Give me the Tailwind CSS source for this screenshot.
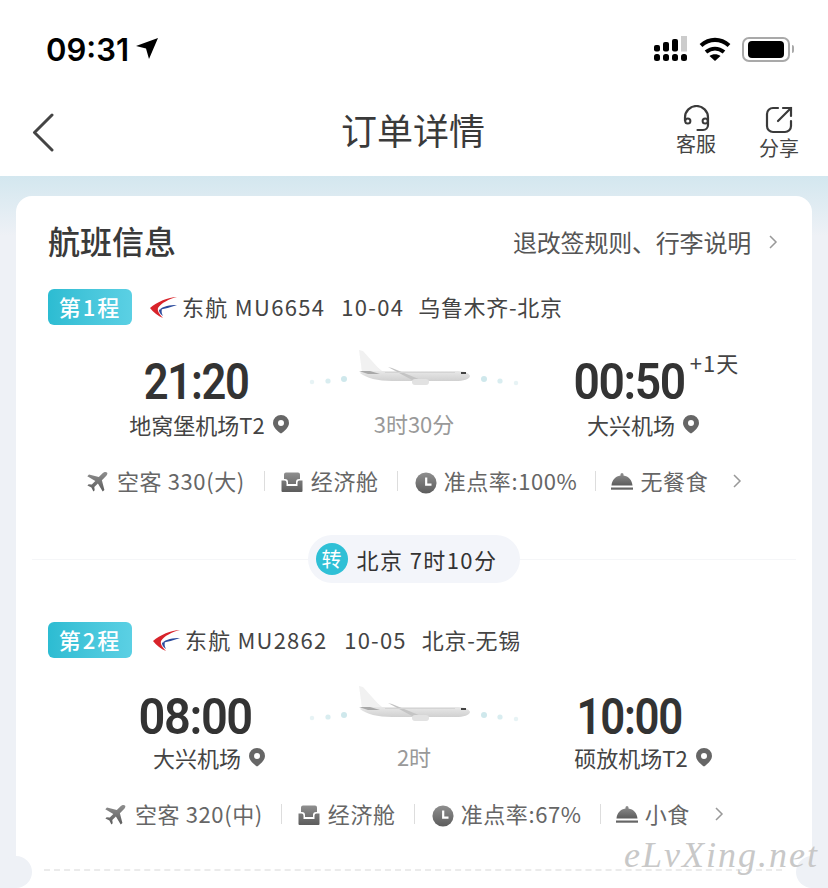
<!DOCTYPE html>
<html lang="zh">
<head>
<meta charset="utf-8">
<script src="https://cdn.jsdelivr.net/npm/@tailwindcss/browser@4"></script>
</head>
<body class="m-0">
<svg width="0" height="0" class="absolute">
  <defs>
    <linearGradient id="g" x1="0" y1="0" x2="0" y2="1"><stop offset="0" stop-color="#8f8f8f"/><stop offset="1" stop-color="#5c5c5c"/></linearGradient>
    <linearGradient id="pb" x1="0" y1="0" x2="0" y2="1"><stop offset="0" stop-color="#ffffff"/><stop offset="0.5" stop-color="#f6f6f6"/><stop offset="1" stop-color="#d0d0d0"/></linearGradient>
    <symbol id="plane" viewBox="0 0 212 50">
      <g fill="#cfe8ec"><circle cx="4" cy="40" r="2.200" opacity=".5"/><circle cx="20" cy="39" r="2.600" opacity=".8"/><circle cx="36" cy="37" r="3"/><circle cx="176" cy="37" r="3"/><circle cx="192" cy="39" r="2.600" opacity=".8"/><circle cx="208" cy="41" r="2.200" opacity=".5"/></g>
      <path d="M51 8 L55 9 C60 15 66 23 74 29 L150 29 C157 29 162 32 162 34 C162 37 155 39 148 39 L84 39 C70 39 58 36 52 31 L54 29 Z" fill="url(#pb)"/>
      <path d="M51 8 L55 9 L73 29 L54 29 Z" fill="#f1f1f1"/>
      <path d="M51 29 L62 29 L72 32 L60 32 Z" fill="#a8a8a8"/>
      <path d="M80 25 L84 26 L113 38 L104 38 Z" fill="#c4c4c4"/>
      <rect x="104" y="37" width="17" height="6" rx="3" fill="#e2e2e2"/>
      <rect x="77" y="30" width="70" height="1" fill="#d4d4d4"/>
      <rect x="153" y="30" width="5" height="2" fill="#444"/>
    </symbol>
    <symbol id="fly" viewBox="0 0 24 24"><path d="M22 2.500c-1-1-3-.6-4.400.8L13.800 7 4 4.500 2.300 6.200 10.300 11 6.800 14.600 3.700 14.200 2.400 15.500l4 2 2 4 1.300-1.300-.4-3.100 3.600-3.500 4.800 8 1.700-1.700L16.900 10.300l3.700-3.800C22 5.100 23 3.500 22 2.500z" fill="url(#g)"/></symbol>
    <symbol id="seat" viewBox="0 0 24 24"><path d="M6 2.500h12a2 2 0 0 1 2 2V9h-1a3 3 0 0 0-3 3v2H8v-2a3 3 0 0 0-3-3H4V4.500a2 2 0 0 1 2-2zM1.500 10.500h3a2 2 0 0 1 2 2V16h11v-3.500a2 2 0 0 1 2-2h3V21a1 1 0 0 1-1 1H2.500a1 1 0 0 1-1-1z" fill="url(#g)"/></symbol>
    <symbol id="clock" viewBox="0 0 24 24"><circle cx="12" cy="12" r="11.500" fill="url(#g)"/><path d="M11 6h2.400v6.500H18v2.400h-7z" fill="#fff"/></symbol>
    <symbol id="bell" viewBox="0 0 24 24"><path d="M10.500 4.500a1.500 1.500 0 1 1 3 0v1c5 .6 8.500 4.600 9 10h-21c.5-5.400 4-9.400 9-10z" fill="url(#g)"/><rect x="1" y="17.500" width="22" height="2.200" fill="#666"/></symbol>
    <symbol id="pin" viewBox="0 0 18 20"><path fill-rule="evenodd" d="M9 1a8 8 0 0 1 8 8c0 4.500-5 8.500-8 10.500C6 17.500 1 13.500 1 9a8 8 0 0 1 8-8zm0 5a3 3 0 1 0 0 6 3 3 0 0 0 0-6z" fill="#666"/></symbol>
    <symbol id="chev" viewBox="0 0 10 16"><path d="M2 2l6 6-6 6" fill="none" stroke="#999" stroke-width="1.500"/></symbol>
    <symbol id="ce" viewBox="0 0 30 24"><path d="M28 2C19 2 8 7 1 13c3 4 8 8 13 10-3-3-6-7-5-10 3-5 11-9 19-11z" fill="#d8232a"/><path d="M28 10c-7 0-14 1-18 5 5-1 12-3 18-5z" fill="#2a4a9c"/><path d="M10 15c0 2 1 4 4 6-1-2-2-4-1-7z" fill="#2a4a9c"/></symbol>
  </defs>
</svg>

<div class="relative h-[888px] w-[828px] overflow-hidden bg-[#eef1f6] font-['Noto_Sans_CJK_SC','Noto_Sans',sans-serif] text-[#333]">
  <header class="h-[176px] bg-white">
    <div class="flex h-[88px] items-center justify-between pl-[46px] pr-[34px] pt-[10px]">
      <div class="flex items-center gap-[7px]">
        <span class="font-['Inter',sans-serif] text-[31px] font-semibold leading-none text-black">09:31</span>
        <svg width="22" height="22" viewBox="0 0 22 22"><path d="M22 0 0 8l10 2.500L13 21z" fill="#000"/></svg>
      </div>
      <div class="flex items-center gap-[11px]">
        <svg width="34" height="26" viewBox="0 0 34 26"><g fill="#000"><rect x="0" y="9" width="6" height="6.500" rx="2"/><rect x="9" y="6" width="6" height="9.500" rx="2"/><rect x="18" y="3" width="6" height="12.500" rx="2"/><rect x="0" y="18" width="6" height="7" rx="2.500"/><rect x="9" y="18" width="6" height="7" rx="2.500"/><rect x="18" y="18" width="6" height="7" rx="2.500"/><rect x="27" y="18" width="6" height="7" rx="2.500"/></g><rect x="27" y="0" width="6" height="15.500" fill="#ccc"/></svg>
        <svg width="32" height="26" viewBox="0 0 32 26"><path d="M16 25l-5.500-5c3-2.500 8-2.500 11 0z" fill="#000"/><path d="M7 16c5.500-4.500 12.500-4.500 18 0" fill="none" stroke="#000" stroke-width="4"/><path d="M2 9.500c8.500-7.500 19.500-7.500 28 0" fill="none" stroke="#000" stroke-width="4.200"/></svg>
        <div class="flex items-center gap-[2px]">
          <div class="flex h-[25px] w-[48px] items-center justify-center rounded-[7px] border-2 border-[#a9a9a9]"><div class="h-[17px] w-[36px] rounded-[4px] bg-black"></div></div>
          <div class="h-[8px] w-[2px] rounded-r-full bg-[#a9a9a9]"></div>
        </div>
      </div>
    </div>
    <div class="relative flex h-[88px] items-center justify-center pb-[6px] pr-[2px]">
      <svg class="absolute left-[32px] top-[24px]" width="24" height="40" viewBox="0 0 24 40"><path d="M20 3 2.500 20.500 20 38" fill="none" stroke="#444" stroke-width="3" stroke-linecap="round" stroke-linejoin="round"/></svg>
      <h1 class="text-[36px] font-normal leading-none text-[#3a3a3a]">订单详情</h1>
      <div class="absolute left-[676px] top-[17px] flex w-[40px] flex-col items-center">
        <svg width="27" height="27" viewBox="0 0 27 27"><path d="M2 15.500V12.500a11.500 11.500 0 0 1 23 0V20a5 5 0 0 1-5 5h-5.500" fill="none" stroke="#3a3a3a" stroke-width="2.200" stroke-linecap="round"/><circle cx="4.800" cy="16" r="2.600" fill="none" stroke="#3a3a3a" stroke-width="2"/><circle cx="22.200" cy="16" r="2.600" fill="none" stroke="#3a3a3a" stroke-width="2"/></svg>
        <span class="text-[20px] leading-[24px] text-[#444]">客服</span>
      </div>
      <div class="absolute left-[759px] top-[18px] flex w-[40px] flex-col items-center">
        <svg width="28" height="28" viewBox="0 0 28 28"><path d="M13 2H8a6 6 0 0 0-6 6v12a6 6 0 0 0 6 6h12a6 6 0 0 0 6-6v-5" fill="none" stroke="#3a3a3a" stroke-width="2.200" stroke-linecap="round"/><path d="M13 15 26 2M18 2h8v8" fill="none" stroke="#3a3a3a" stroke-width="2.200" stroke-linecap="round"/></svg>
        <span class="mt-[2px] text-[20px] leading-[24px] text-[#444]">分享</span>
      </div>
    </div>
  </header>

  <div class="h-[60px] bg-gradient-to-b from-[#d3e7ef] to-[#eef1f6]"></div>

  <main class="absolute left-[16px] top-[196px] h-[720px] w-[796px] rounded-[16px] bg-white">
    <div class="flex h-[93px] items-center justify-between pb-[5px] pl-[32px] pr-[34px]">
      <h2 class="text-[32px] font-medium leading-none text-[#3a3a3a]">航班信息</h2>
      <div class="mt-[4px] flex items-center gap-[17px] text-[24px] leading-none tracking-[-0.2px] text-[#555]">退改签规则、行李说明<svg width="10" height="16"><use href="#chev"/></svg></div>
    </div>

    <!-- leg 1 -->
    <div class="flex h-[36px] items-center pl-[32px]">
      <span class="flex h-[36px] w-[84px] items-center justify-center rounded-[6px] bg-gradient-to-r from-[#2cbcd2] to-[#5bd0e4] pb-[3px] text-[22px] font-medium leading-none tracking-[2px] text-white">第1程</span>
      <svg class="ml-[17px]" width="30" height="24"><use href="#ce"/></svg>
      <div class="mb-[3px] ml-[3px] flex gap-[16px] whitespace-pre text-[22px] leading-none text-[#444]"><span class="tracking-[1.300px]">东航 MU6654</span><span class="tracking-[1.300px]">10-04</span><span class="ml-[-2px] tracking-[0.700px]">乌鲁木齐-北京</span></div>
    </div>
    <div class="grid h-[137px] grid-cols-[296px_204px_296px] pt-[27px]">
      <div class="flex flex-col items-center pl-[66px]">
        <span class="ml-[-2px] scale-x-[0.87] font-['Roboto',sans-serif] text-[50px] font-semibold leading-[60px] tracking-[-1.500px] text-[#333]">21:20</span>
        <span class="relative mt-[-2px] whitespace-nowrap text-[22px] leading-[28px] text-[#444]">地窝堡机场T2<svg class="absolute left-full top-[4px] ml-[7px]" width="18" height="20"><use href="#pin"/></svg></span>
      </div>
      <div class="flex flex-col items-center">
        <svg class="mt-[-10px]" width="212" height="50"><use href="#plane"/></svg>
        <span class="mt-[17px] text-[22px] leading-[28px] text-[#999]">3时30分</span>
      </div>
      <div class="flex flex-col items-center pr-[66px]">
        <div class="relative">
          <span class="ml-[-4px] block scale-x-[0.925] font-['Roboto',sans-serif] text-[50px] font-semibold leading-[60px] tracking-[-1.500px] text-[#333]">00:50</span>
          <span class="absolute left-[117px] top-[-4px] whitespace-nowrap text-[22px] leading-[28px] tracking-[1px] text-[#444]">+1天</span>
        </div>
        <span class="relative mt-[-2px] whitespace-nowrap text-[22px] leading-[28px] text-[#444]">大兴机场<svg class="absolute left-full top-[4px] ml-[7px]" width="18" height="20"><use href="#pin"/></svg></span>
      </div>
    </div>
    <div class="mt-[2px] flex h-[34px] items-center pl-[69px] text-[22px] leading-none tracking-[0.6px] text-[#666]">
      <svg class="mt-[2px]" width="24" height="24"><use href="#fly"/></svg><span class="mb-[2px] ml-[8px]">空客 330(大)</span>
      <i class="ml-[19px] mr-[15px] h-[20px] w-px bg-[#ddd]"></i>
      <svg class="mt-[2px]" width="24" height="24"><use href="#seat"/></svg><span class="mb-[2px] ml-[7px]">经济舱</span>
      <i class="ml-[18px] mr-[17px] h-[20px] w-px bg-[#ddd]"></i>
      <svg class="mt-[4px]" width="22" height="22"><use href="#clock"/></svg><span class="mb-[2px] ml-[7px]">准点率:100%</span>
      <i class="ml-[18px] mr-[14px] h-[20px] w-px bg-[#ddd]"></i>
      <svg class="mt-[2px]" width="24" height="24"><use href="#bell"/></svg><span class="mb-[2px] ml-[6px]">无餐食</span>
      <svg class="ml-[24px]" width="10" height="16"><use href="#chev"/></svg>
    </div>

    <div class="relative mt-[37px] flex h-[48px] items-center justify-center">
      <div class="absolute inset-x-[16px] top-[24px] h-px bg-[#f5f6f8]"></div>
      <div class="relative flex h-[48px] items-center gap-[9px] rounded-full bg-[#f3f5fa] pl-[8px] pr-[23px]">
        <span class="flex h-[32px] w-[32px] items-center justify-center rounded-full bg-[#2fc0d6] text-[20px] leading-none text-white">转</span>
        <span class="whitespace-pre text-[22px] leading-none tracking-[1.400px] text-[#333]">北京 7时10分</span>
      </div>
    </div>

    <!-- leg 2 -->
    <div class="mt-[39px] flex h-[36px] items-center pl-[32px]">
      <span class="flex h-[36px] w-[84px] items-center justify-center rounded-[6px] bg-gradient-to-r from-[#2cbcd2] to-[#5bd0e4] pb-[3px] text-[22px] font-medium leading-none tracking-[2px] text-white">第2程</span>
      <svg class="ml-[20px]" width="30" height="24"><use href="#ce"/></svg>
      <div class="mb-[3px] ml-[3px] flex gap-[17px] whitespace-pre text-[22px] leading-none text-[#444]"><span class="tracking-[1.200px]">东航 MU2862</span><span class="tracking-[1.200px]">10-05</span><span class="ml-[-2px] tracking-[0.700px]">北京-无锡</span></div>
    </div>
    <div class="grid h-[137px] grid-cols-[296px_204px_296px] pt-[31px]">
      <div class="flex flex-col items-center pl-[66px]">
        <span class="ml-[-3px] scale-x-[0.94] font-['Roboto',sans-serif] text-[50px] font-semibold leading-[56px] tracking-[-1.500px] text-[#333]">08:00</span>
        <span class="relative mt-[-2px] whitespace-nowrap text-[22px] leading-[28px] text-[#444]">大兴机场<svg class="absolute left-full top-[4px] ml-[7px]" width="18" height="20"><use href="#pin"/></svg></span>
      </div>
      <div class="flex flex-col items-center">
        <svg class="mt-[-11px]" width="212" height="50"><use href="#plane"/></svg>
        <span class="mt-[14px] text-[22px] leading-[28px] text-[#999]">2时</span>
      </div>
      <div class="flex flex-col items-center pr-[66px]">
        <span class="ml-[-4px] scale-x-[0.875] font-['Roboto',sans-serif] text-[50px] font-semibold leading-[56px] tracking-[-1.500px] text-[#333]">10:00</span>
        <span class="relative mt-[-2px] whitespace-nowrap text-[22px] leading-[28px] text-[#444]">硕放机场T2<svg class="absolute left-full top-[4px] ml-[7px]" width="18" height="20"><use href="#pin"/></svg></span>
      </div>
    </div>
    <div class="mt-[2px] flex h-[34px] items-center pl-[87px] text-[22px] leading-none tracking-[0.6px] text-[#666]">
      <svg class="mt-[2px]" width="24" height="24"><use href="#fly"/></svg><span class="mb-[2px] ml-[8px]">空客 320(中)</span>
      <i class="ml-[18px] mr-[15px] h-[20px] w-px bg-[#ddd]"></i>
      <svg class="mt-[2px]" width="24" height="24"><use href="#seat"/></svg><span class="mb-[2px] ml-[7px]">经济舱</span>
      <i class="ml-[18px] mr-[17px] h-[20px] w-px bg-[#ddd]"></i>
      <svg class="mt-[4px]" width="22" height="22"><use href="#clock"/></svg><span class="mb-[2px] ml-[7px]">准点率:67%</span>
      <i class="ml-[18px] mr-[14px] h-[20px] w-px bg-[#ddd]"></i>
      <svg class="mt-[2px]" width="24" height="24"><use href="#bell"/></svg><span class="mb-[2px] ml-[6px]">小食</span>
      <svg class="ml-[24px]" width="10" height="16"><use href="#chev"/></svg>
    </div>
    <div class="ml-[28px] mr-[30px] mt-[38px] border-t-2 border-dashed border-[#ebebeb]"></div>
  </main>
  <div class="absolute left-0 top-[856px] h-[32px] w-[32px] rounded-full bg-[#eef1f6]"></div>
  <div class="absolute left-[796px] top-[856px] h-[32px] w-[32px] rounded-full bg-[#eef1f6]"></div>
  <span class="absolute left-[624px] top-[833px] font-['Liberation_Serif',serif] text-[36px] italic leading-[44px] tracking-[2px] text-[#c8c8c8]">eLvXing.net</span>
</div>
</body>
</html>
